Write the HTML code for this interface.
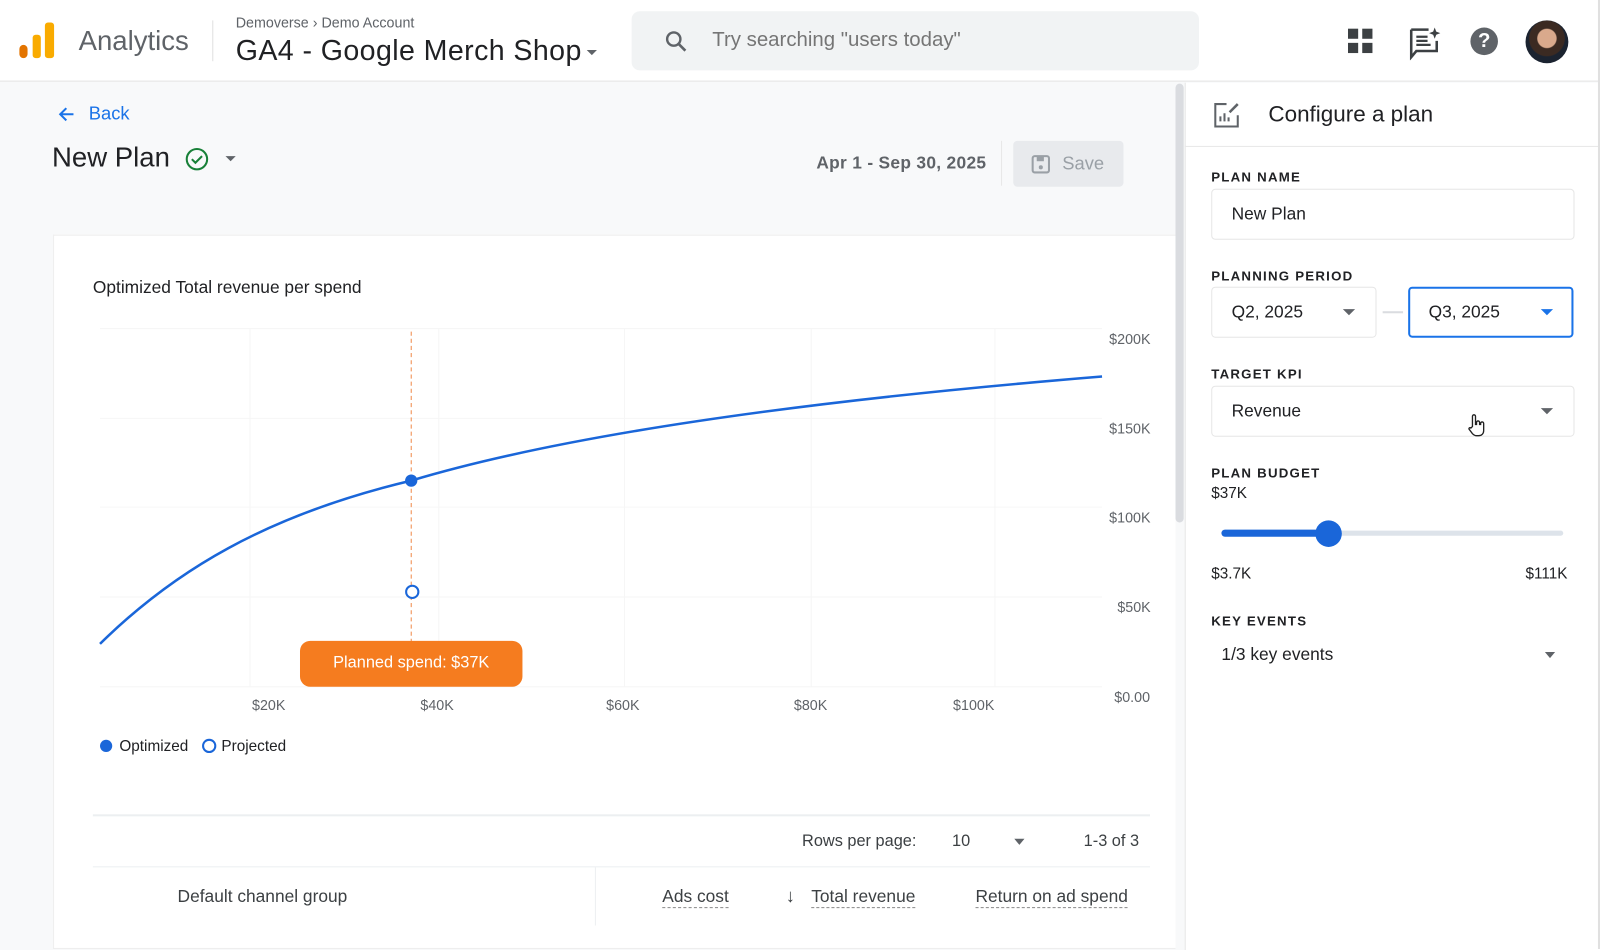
<!DOCTYPE html>
<html><head><meta charset="utf-8"><style>
*{box-sizing:border-box;margin:0;padding:0}
html,body{width:1600px;height:925px;overflow:hidden;background:#f8f9fa;font-family:"Liberation Sans",Arial,sans-serif;color:#202124}
#w{position:absolute;left:0;top:0;width:1568px;height:907px;transform:scale(1.020408);transform-origin:0 0;background:#f8f9fa}
.a{position:absolute}
.hdr{left:0;top:0;width:1568px;height:80px;background:#fff;border-bottom:1px solid #e3e3e3}
.lbl{font-size:13px;letter-spacing:1.2px;font-weight:bold;color:#202124}
.box{border:1px solid #e6e6e6;border-radius:4px;background:#fff}
.tri{width:0;height:0;border-left:6px solid transparent;border-right:6px solid transparent;border-top:6px solid #5f6368}
.ax{font-size:14px;color:#5f6368}
</style></head><body><div id="w">
<div class="a hdr"></div>
<div class="a" style="left:19px;top:44px;width:8px;height:13px;background:#e37400;border-radius:4px"></div>
<div class="a" style="left:32px;top:34px;width:8px;height:23px;background:#f9ab00;border-radius:3px"></div>
<div class="a" style="left:44px;top:22px;width:9px;height:35px;background:#f9ab00;border-radius:3px"></div>
<div class="a" style="left:77px;top:25px;font-size:27px;color:#5f6368">Analytics</div>
<div class="a" style="left:208px;top:20px;width:1px;height:40px;background:#e0e0e0"></div>
<div class="a" style="left:231px;top:14px;font-size:14px;color:#5f6368">Demoverse &#8250; Demo Account</div>
<div class="a" style="left:231px;top:34px;font-size:28px;letter-spacing:0.4px;color:#202124">GA4 - Google Merch Shop</div>
<div class="a tri" style="left:575px;top:49px;border-width:5px 5px 0 5px"></div>
<div class="a" style="left:619px;top:11px;width:556px;height:58px;background:#f1f3f4;border-radius:8px"></div>
<svg class="a" style="left:650px;top:28px" width="26" height="26" viewBox="0 0 24 24"><circle cx="9.5" cy="9.5" r="6" fill="none" stroke="#5f6368" stroke-width="2.2"/><path d="M14 14l6 6" stroke="#5f6368" stroke-width="2.4"/></svg>
<div class="a" style="left:698px;top:28px;font-size:20px;color:#757575">Try searching "users today"</div>
<svg class="a" style="left:1321px;top:28px" width="25" height="25"><rect x="0" y="0" width="10" height="10" fill="#3c4043"/><rect x="14" y="0" width="10" height="10" fill="#3c4043"/><rect x="0" y="14" width="10" height="10" fill="#3c4043"/><rect x="14" y="14" width="10" height="10" fill="#3c4043"/></svg>
<svg class="a" style="left:1380px;top:25px" width="32" height="34" viewBox="0 0 32 34"><path d="M3 4h17M3 4v27l5-6h20v-10" fill="none" stroke="#3c4043" stroke-width="2.5"/><path d="M8 11h11M8 15h11M8 19h14" stroke="#3c4043" stroke-width="2.2"/><path d="M26 2l1.5 4 4 1.5-4 1.5-1.5 4-1.5-4-4-1.5 4-1.5z" fill="#3c4043"/></svg>
<div class="a" style="left:1441px;top:27px;width:27px;height:27px;border-radius:50%;background:#5f6368;color:#fff;font-weight:bold;font-size:20px;text-align:center;line-height:27px">?</div>
<div class="a" style="left:1495px;top:20px;width:42px;height:42px;border-radius:50%;background:radial-gradient(circle at 50% 42%,#d9a98c 0 9px,#3b2a22 10px 17px,#1b2330 18px)"></div>
<svg class="a" style="left:56px;top:103px" width="18" height="18" viewBox="0 0 18 18"><path d="M16 9H3M9 3L3 9l6 6" fill="none" stroke="#1a73e8" stroke-width="2"/></svg>
<div class="a" style="left:87px;top:101px;font-size:18px;color:#1a73e8">Back</div>
<div class="a" style="left:51px;top:139px;font-size:27px">New Plan</div>
<svg class="a" style="left:181px;top:144px" width="24" height="24"><circle cx="12" cy="12" r="10" fill="none" stroke="#188038" stroke-width="2"/><path d="M7 12l3.5 3.5L17 9" fill="none" stroke="#188038" stroke-width="2"/></svg>
<div class="a tri" style="left:221px;top:153px;border-width:5px 5px 0 5px"></div>
<div class="a" style="left:800px;top:150px;font-size:17px;font-weight:bold;letter-spacing:0.3px;color:#5f6368">Apr 1 - Sep 30, 2025</div>
<div class="a" style="left:981px;top:138px;width:1px;height:44px;background:#e8e8e8"></div>
<div class="a" style="left:993px;top:138px;width:108px;height:45px;background:#e8eaed;border-radius:4px"></div>
<svg class="a" style="left:1010px;top:151px" width="20" height="20"><rect x="2" y="2" width="16" height="16" rx="2" fill="none" stroke="#9aa0a6" stroke-width="2"/><rect x="6" y="2" width="7" height="5" fill="#9aa0a6"/><circle cx="10" cy="13" r="2" fill="#9aa0a6"/></svg>
<div class="a" style="left:1041px;top:150px;font-size:18px;color:#9aa0a6">Save</div>
<div class="a" style="left:52px;top:230px;width:1100px;height:700px;background:#fff;border:1px solid #eee;border-right:none"></div>
<div class="a" style="left:91px;top:272px;font-size:17px;color:#202124">Optimized Total revenue per spend</div>
<svg class="a" style="left:0;top:0" width="1160" height="907">
<g stroke="#f6f6f6" stroke-width="1"><line x1="98" y1="322" x2="1080" y2="322"/><line x1="98" y1="410" x2="1080" y2="410"/><line x1="98" y1="497" x2="1080" y2="497"/><line x1="98" y1="585" x2="1080" y2="585"/><line x1="98" y1="673" x2="1080" y2="673"/>
<line x1="245" y1="322" x2="245" y2="673"/><line x1="430" y1="322" x2="430" y2="673"/><line x1="612" y1="322" x2="612" y2="673"/><line x1="795" y1="322" x2="795" y2="673"/><line x1="975" y1="322" x2="975" y2="673"/></g>
<line x1="403" y1="325" x2="403" y2="630" stroke="#f08a4b" stroke-width="1" stroke-dasharray="4,3"/>
<path d="M98,631 C170,560 260,505 403,471 C540,430 760,395 1080,369" fill="none" stroke="#1a66d9" stroke-width="2.5"/>
<circle cx="403" cy="471" r="6" fill="#1a66d9"/>
<circle cx="404" cy="580" r="6" fill="#fff" stroke="#1a66d9" stroke-width="2"/>
<circle cx="104" cy="731" r="6" fill="#1a66d9"/>
<circle cx="205" cy="731" r="6" fill="#fff" stroke="#1a66d9" stroke-width="2"/>
</svg>
<div class="a" style="left:294px;top:628px;width:218px;height:45px;background:#f57c1f;border-radius:10px;color:#fff;font-size:16px;text-align:center;line-height:43px">Planned spend: $37K</div>
<div class="a ax" style="left:1087px;top:324px">$200K</div>
<div class="a ax" style="left:1087px;top:412px">$150K</div>
<div class="a ax" style="left:1087px;top:499px">$100K</div>
<div class="a ax" style="left:1095px;top:587px">$50K</div>
<div class="a ax" style="left:1092px;top:675px">$0.00</div>
<div class="a ax" style="left:247px;top:683px">$20K</div>
<div class="a ax" style="left:412px;top:683px">$40K</div>
<div class="a ax" style="left:594px;top:683px">$60K</div>
<div class="a ax" style="left:778px;top:683px">$80K</div>
<div class="a ax" style="left:934px;top:683px">$100K</div>
<div class="a" style="left:117px;top:723px;font-size:15px">Optimized</div>
<div class="a" style="left:217px;top:723px;font-size:15px">Projected</div>
<div class="a" style="left:91px;top:798px;width:1036px;height:2px;background:#eceff1"></div>
<div class="a" style="left:786px;top:816px;font-size:16px;color:#3c4043">Rows per page:</div>
<div class="a" style="left:933px;top:816px;font-size:16px;color:#3c4043">10</div>
<div class="a tri" style="left:994px;top:822px;border-width:6px 5px 0 5px"></div>
<div class="a" style="left:1062px;top:816px;font-size:16px;color:#3c4043">1-3 of 3</div>
<div class="a" style="left:91px;top:849px;width:1036px;height:1px;background:#eceff1"></div>
<div class="a" style="left:583px;top:850px;width:1px;height:57px;background:#eceff1"></div>
<div class="a" style="left:174px;top:869px;font-size:17px;color:#3c4043">Default channel group</div>
<div class="a" style="left:649px;top:869px;font-size:17px;color:#3c4043;border-bottom:1px dashed #888">Ads cost</div>
<div class="a" style="left:770px;top:868px;font-size:18px;color:#3c4043">&#8595;</div>
<div class="a" style="left:795px;top:869px;font-size:17px;color:#3c4043;border-bottom:1px dashed #888">Total revenue</div>
<div class="a" style="left:956px;top:869px;font-size:17px;color:#3c4043;border-bottom:1px dashed #888">Return on ad spend</div>
<div class="a" style="left:1152px;top:82px;width:8px;height:430px;background:#dadce0;border-radius:4px"></div>
<div class="a" style="left:1161px;top:81px;width:407px;height:850px;background:#fff;border-left:1px solid #e6e6e6"></div>
<div class="a" style="left:1161px;top:143px;width:407px;height:1px;background:#e8e8e8"></div>
<svg class="a" style="left:1188px;top:99px" width="28" height="28" viewBox="0 0 28 28"><path d="M14 3H3v22h22V14" fill="none" stroke="#5f6368" stroke-width="2"/><path d="M8 20v-5M12 20v-8M16 20v-4" stroke="#5f6368" stroke-width="2"/><path d="M17 11l8-8" stroke="#5f6368" stroke-width="2.5"/></svg>
<div class="a" style="left:1243px;top:99px;font-size:22px;color:#202124">Configure a plan</div>
<div class="a lbl" style="left:1187px;top:166px">PLAN NAME</div>
<div class="a box" style="left:1187px;top:185px;width:356px;height:50px"></div>
<div class="a" style="left:1207px;top:200px;font-size:17px">New Plan</div>
<div class="a lbl" style="left:1187px;top:263px">PLANNING PERIOD</div>
<div class="a box" style="left:1187px;top:281px;width:162px;height:50px"></div>
<div class="a" style="left:1207px;top:296px;font-size:17px">Q2, 2025</div>
<div class="a tri" style="left:1316px;top:303px"></div>
<div class="a" style="left:1355px;top:305px;width:20px;height:2px;background:#dadce0"></div>
<div class="a" style="left:1380px;top:281px;width:162px;height:50px;border:2px solid #1a73e8;border-radius:4px;background:#fff"></div>
<div class="a" style="left:1400px;top:296px;font-size:17px">Q3, 2025</div>
<div class="a tri" style="left:1510px;top:303px;border-top-color:#1a73e8"></div>
<div class="a lbl" style="left:1187px;top:359px">TARGET KPI</div>
<div class="a box" style="left:1187px;top:378px;width:356px;height:50px"></div>
<div class="a" style="left:1207px;top:393px;font-size:17px">Revenue</div>
<div class="a tri" style="left:1510px;top:400px"></div>
<svg class="a" style="left:1437px;top:405px" width="20" height="24" viewBox="0 0 20 24"><path d="M6 13V3a1.5 1.5 0 013 0v8h1V9a1.5 1.5 0 013 0v2h1v-1a1.5 1.5 0 013 0v7c0 3-2 5-5 5h-2c-2 0-3-1-4-2l-3-4c-1-1 0-2.5 1.5-1.5z" fill="#fff" stroke="#222" stroke-width="1.3"/></svg>
<div class="a lbl" style="left:1187px;top:456px">PLAN BUDGET</div>
<div class="a" style="left:1187px;top:475px;font-size:15px">$37K</div>
<div class="a" style="left:1197px;top:520px;width:335px;height:5px;background:#dde3ea;border-radius:3px"></div>
<div class="a" style="left:1197px;top:519px;width:106px;height:7px;background:#1a66d9;border-radius:4px"></div>
<div class="a" style="left:1289px;top:510px;width:26px;height:26px;background:#1a66d9;border-radius:50%"></div>
<div class="a" style="left:1187px;top:554px;font-size:15px">$3.7K</div>
<div class="a" style="left:1495px;top:554px;font-size:15px">$111K</div>
<div class="a lbl" style="left:1187px;top:601px">KEY EVENTS</div>
<div class="a" style="left:1197px;top:632px;font-size:17px">1/3 key events</div>
<div class="a tri" style="left:1514px;top:639px;border-width:6px 5px 0 5px"></div>
<div class="a" style="left:1566px;top:0;width:2px;height:930px;background:#e0e0e0"></div>
</div></body></html>
